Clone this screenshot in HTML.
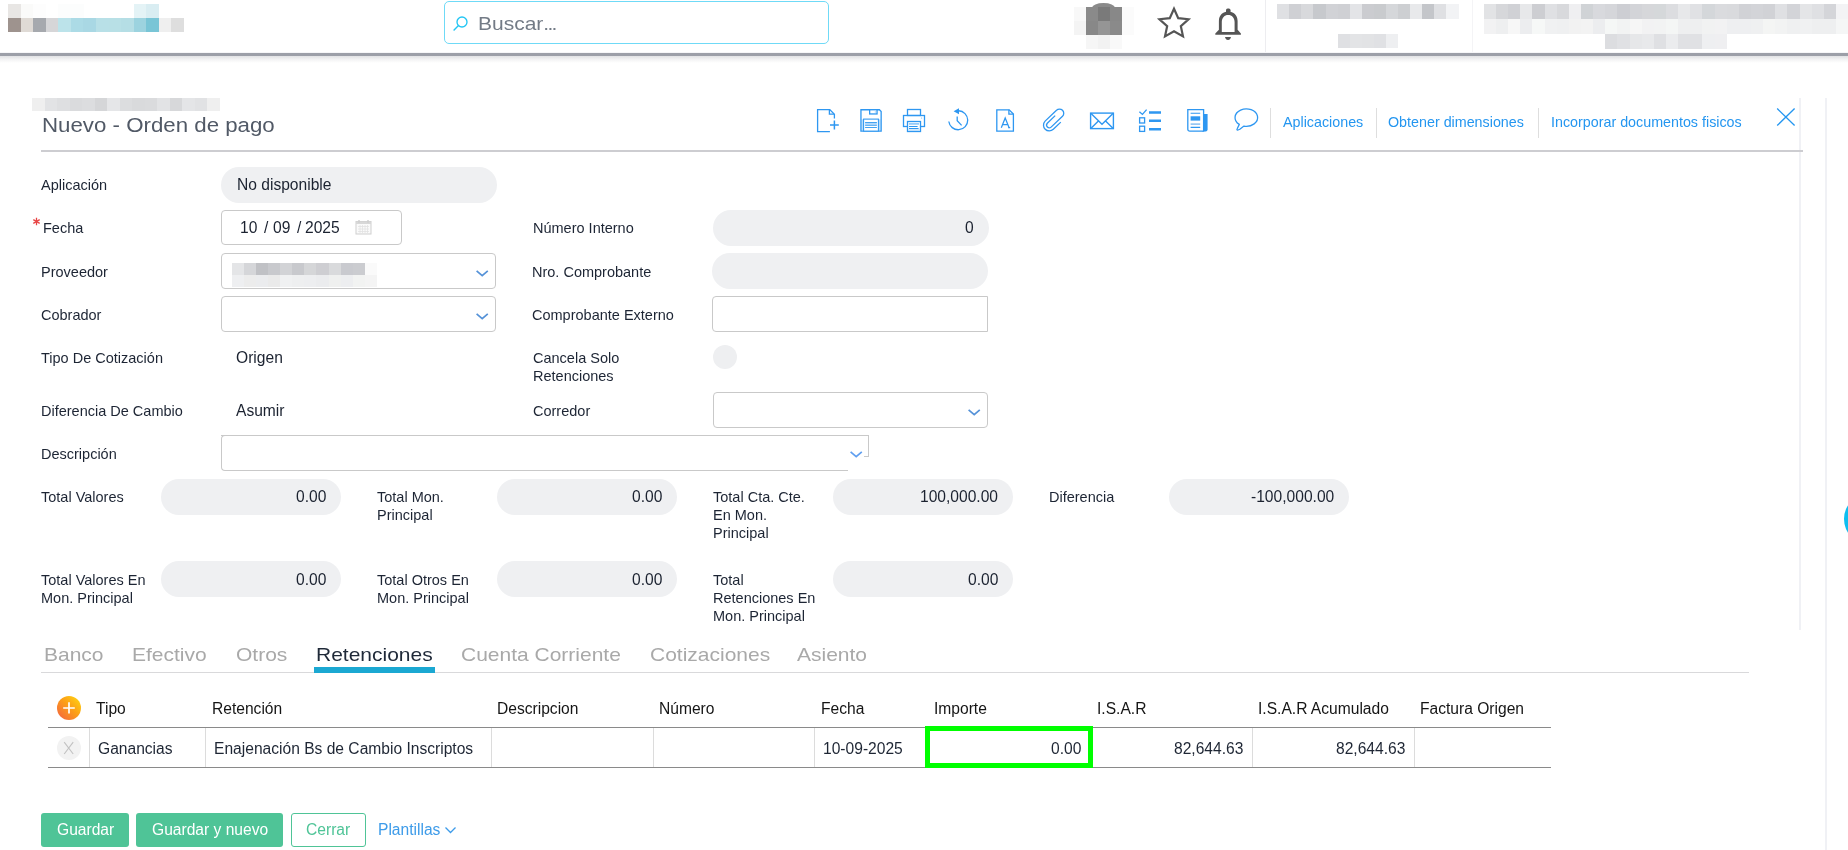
<!DOCTYPE html>
<html><head><meta charset="utf-8">
<style>
*{box-sizing:border-box;margin:0;padding:0}
html,body{width:1848px;height:850px;overflow:hidden;background:#fff;font-family:"Liberation Sans",sans-serif;color:#2b3340}
.a{position:absolute;white-space:nowrap;line-height:1;will-change:transform}
.px{position:absolute}
.inp{position:absolute;border:1px solid #c9c9c9;border-radius:4px;background:#fff}
</style></head><body>
<div class="px" style="left:0px;top:52px;width:1848px;height:1px;background:#f6f6f8"></div>
<div class="px" style="left:0px;top:53px;width:1848px;height:3px;background:#9c9fa8"></div>
<div class="px" style="left:0px;top:56px;width:1848px;height:7px;background:linear-gradient(#e1e2e4,#f3f3f4 50%,#ffffff)"></div>
<div class="px" style="left:8.00px;top:4px;width:12.87px;height:14px;background:#e8e6e4"></div>
<div class="px" style="left:20.57px;top:4px;width:12.87px;height:14px;background:#fafaf9"></div>
<div class="px" style="left:33.14px;top:4px;width:12.87px;height:14px;background:#fdfdfd"></div>
<div class="px" style="left:58.28px;top:4px;width:12.87px;height:14px;background:#fcfdfd"></div>
<div class="px" style="left:70.85px;top:4px;width:12.87px;height:14px;background:#fcfdfd"></div>
<div class="px" style="left:133.70px;top:4px;width:12.87px;height:14px;background:#e4f3f6"></div>
<div class="px" style="left:146.27px;top:4px;width:12.87px;height:14px;background:#d9edf2"></div>
<div class="px" style="left:8.00px;top:18px;width:12.87px;height:14px;background:#9e938e"></div>
<div class="px" style="left:20.57px;top:18px;width:12.87px;height:14px;background:#dfdad5"></div>
<div class="px" style="left:33.14px;top:18px;width:12.87px;height:14px;background:#a6a9ae"></div>
<div class="px" style="left:45.71px;top:18px;width:12.87px;height:14px;background:#d6d6d8"></div>
<div class="px" style="left:58.28px;top:18px;width:12.87px;height:14px;background:#bce3ea"></div>
<div class="px" style="left:70.85px;top:18px;width:12.87px;height:14px;background:#acdbe6"></div>
<div class="px" style="left:83.42px;top:18px;width:12.87px;height:14px;background:#a9d8e4"></div>
<div class="px" style="left:95.99px;top:18px;width:12.87px;height:14px;background:#b8e0e7"></div>
<div class="px" style="left:108.56px;top:18px;width:12.87px;height:14px;background:#b8e0e6"></div>
<div class="px" style="left:121.13px;top:18px;width:12.87px;height:14px;background:#b5dee5"></div>
<div class="px" style="left:133.70px;top:18px;width:12.87px;height:14px;background:#9cd3df"></div>
<div class="px" style="left:146.27px;top:18px;width:12.87px;height:14px;background:#79c5d6"></div>
<div class="px" style="left:158.84px;top:18px;width:12.87px;height:14px;background:#efefef"></div>
<div class="px" style="left:171.41px;top:18px;width:12.87px;height:14px;background:#dedede"></div>
<div class="px" style="left:444px;top:1px;width:385px;height:43px;border:1px solid #6fdaf7;border-radius:5px;background:#fff"></div>
<svg class="px" style="left:452px;top:15px" width="18" height="18" viewBox="0 0 18 18"><circle cx="10" cy="7" r="5" fill="none" stroke="#22c6f4" stroke-width="1.35"/><path d="M6.5 10.6 L1.6 15.5" stroke="#22c6f4" stroke-width="1.4"/></svg>
<div class="a " style="left:478px;top:14.00px;font-size:19px;color:#737b86;transform:scaleX(1.105);transform-origin:0 0">Buscar<span style="letter-spacing:-1.55px">...</span></div>
<div class="px" style="left:1092px;top:3px;width:23px;height:10px;border-radius:50%;background:#8a8a8a"></div>
<div class="px" style="left:1074.00px;top:7px;width:12.30px;height:14px;background:#f8f8f8"></div>
<div class="px" style="left:1086.00px;top:7px;width:12.30px;height:14px;background:#8a8a8a"></div>
<div class="px" style="left:1098.00px;top:7px;width:12.30px;height:14px;background:#7a7a7a"></div>
<div class="px" style="left:1110.00px;top:7px;width:12.30px;height:14px;background:#888888"></div>
<div class="px" style="left:1122.00px;top:7px;width:12.30px;height:14px;background:#fbfbfb"></div>
<div class="px" style="left:1074.00px;top:21px;width:12.30px;height:14px;background:#f4f4f4"></div>
<div class="px" style="left:1086.00px;top:21px;width:12.30px;height:14px;background:#888888"></div>
<div class="px" style="left:1098.00px;top:21px;width:12.30px;height:14px;background:#959595"></div>
<div class="px" style="left:1110.00px;top:21px;width:12.30px;height:14px;background:#8a8a8a"></div>
<div class="px" style="left:1122.00px;top:21px;width:12.30px;height:14px;background:#fbfbfb"></div>
<div class="px" style="left:1086.00px;top:35px;width:12.30px;height:14px;background:#f6f6f6"></div>
<div class="px" style="left:1098.00px;top:35px;width:12.30px;height:14px;background:#f2f2f2"></div>
<div class="px" style="left:1110.00px;top:35px;width:12.30px;height:14px;background:#f9f9f9"></div>
<svg class="px" style="left:1154.4px;top:3.70px" width="40" height="40" viewBox="0 0 40 40"><path d="M20.00 4.70 L24.23 14.18 L34.55 15.27 L26.84 22.22 L28.99 32.38 L20.00 27.19 L11.01 32.38 L13.16 22.22 L5.45 15.27 L15.77 14.18 Z" fill="none" stroke="#555" stroke-width="2.2" stroke-linejoin="miter" stroke-miterlimit="10"/></svg>
<svg class="px" style="left:1213px;top:7px" width="30" height="35" viewBox="0 0 30 35"><rect x="13" y="1.6" width="4.5" height="4.6" rx="1.6" fill="#555"/><path fill="#555" fill-rule="evenodd" d="M5.9 22.8 V13.9 C5.9 8.4 9.9 4.6 15.25 4.6 C20.6 4.6 24.6 8.4 24.6 13.9 V22.8 L27.9 26.4 V27.8 H2.3 V26.4 Z M8.8 25.1 H21.6 V15 C21.6 10.6 18.9 7.9 15.2 7.9 C11.5 7.9 8.8 10.6 8.8 15 Z"/><path d="M12 29.9 H18 C17.6 31.9 16.5 32.9 15 32.9 C13.5 32.9 12.4 31.9 12 29.9 Z" fill="#555"/></svg>
<div class="px" style="left:1265px;top:0px;width:1px;height:52px;background:#ededf0"></div>
<div class="px" style="left:1472px;top:0px;width:1px;height:52px;background:#f4f4f6"></div>
<div class="px" style="left:1277.20px;top:4.0px;width:12.39px;height:14.5px;background:#dfe0e3"></div>
<div class="px" style="left:1289.29px;top:4.0px;width:12.39px;height:14.5px;background:#cfd0d4"></div>
<div class="px" style="left:1301.38px;top:4.0px;width:12.39px;height:14.5px;background:#d8d9dc"></div>
<div class="px" style="left:1313.47px;top:4.0px;width:12.39px;height:14.5px;background:#c7c9cd"></div>
<div class="px" style="left:1325.56px;top:4.0px;width:12.39px;height:14.5px;background:#d1d2d6"></div>
<div class="px" style="left:1337.65px;top:4.0px;width:12.39px;height:14.5px;background:#cfd0d4"></div>
<div class="px" style="left:1349.74px;top:4.0px;width:12.39px;height:14.5px;background:#e3e4e7"></div>
<div class="px" style="left:1361.83px;top:4.0px;width:12.39px;height:14.5px;background:#cbccd0"></div>
<div class="px" style="left:1373.92px;top:4.0px;width:12.39px;height:14.5px;background:#c9cbce"></div>
<div class="px" style="left:1386.01px;top:4.0px;width:12.39px;height:14.5px;background:#d5d7da"></div>
<div class="px" style="left:1398.10px;top:4.0px;width:12.39px;height:14.5px;background:#cdcfd2"></div>
<div class="px" style="left:1410.19px;top:4.0px;width:12.39px;height:14.5px;background:#e8e9eb"></div>
<div class="px" style="left:1422.28px;top:4.0px;width:12.39px;height:14.5px;background:#c4c6ca"></div>
<div class="px" style="left:1434.37px;top:4.0px;width:12.39px;height:14.5px;background:#dfe0e3"></div>
<div class="px" style="left:1446.46px;top:4.0px;width:12.39px;height:14.5px;background:#f2f3f5"></div>
<div class="px" style="left:1338.00px;top:33.5px;width:12.30px;height:14.5px;background:#dfe0e3"></div>
<div class="px" style="left:1350.00px;top:33.5px;width:12.30px;height:14.5px;background:#e3e4e6"></div>
<div class="px" style="left:1362.00px;top:33.5px;width:12.30px;height:14.5px;background:#e2e3e5"></div>
<div class="px" style="left:1374.00px;top:33.5px;width:12.30px;height:14.5px;background:#e0e1e4"></div>
<div class="px" style="left:1386.00px;top:33.5px;width:12.30px;height:14.5px;background:#eeeff1"></div>
<div class="px" style="left:1483.90px;top:4.0px;width:12.44px;height:14.9px;background:#e2e3e5"></div>
<div class="px" style="left:1496.04px;top:4.0px;width:12.44px;height:14.9px;background:#d6d7da"></div>
<div class="px" style="left:1508.18px;top:4.0px;width:12.44px;height:14.9px;background:#d0d1d5"></div>
<div class="px" style="left:1520.32px;top:4.0px;width:12.44px;height:14.9px;background:#e7e8ea"></div>
<div class="px" style="left:1532.46px;top:4.0px;width:12.44px;height:14.9px;background:#cdced2"></div>
<div class="px" style="left:1544.60px;top:4.0px;width:12.44px;height:14.9px;background:#dfe0e3"></div>
<div class="px" style="left:1556.74px;top:4.0px;width:12.44px;height:14.9px;background:#d8d9dc"></div>
<div class="px" style="left:1568.88px;top:4.0px;width:12.44px;height:14.9px;background:#efeff1"></div>
<div class="px" style="left:1581.02px;top:4.0px;width:12.44px;height:14.9px;background:#d0d3d6"></div>
<div class="px" style="left:1593.16px;top:4.0px;width:12.44px;height:14.9px;background:#d8d9dd"></div>
<div class="px" style="left:1605.30px;top:4.0px;width:12.44px;height:14.9px;background:#d5d6da"></div>
<div class="px" style="left:1617.44px;top:4.0px;width:12.44px;height:14.9px;background:#cdced3"></div>
<div class="px" style="left:1629.58px;top:4.0px;width:12.44px;height:14.9px;background:#d3d4d8"></div>
<div class="px" style="left:1641.72px;top:4.0px;width:12.44px;height:14.9px;background:#d6d7da"></div>
<div class="px" style="left:1653.86px;top:4.0px;width:12.44px;height:14.9px;background:#d5d8da"></div>
<div class="px" style="left:1666.00px;top:4.0px;width:12.44px;height:14.9px;background:#dcdde0"></div>
<div class="px" style="left:1678.14px;top:4.0px;width:12.44px;height:14.9px;background:#e7e8ea"></div>
<div class="px" style="left:1690.28px;top:4.0px;width:12.44px;height:14.9px;background:#e0e1e4"></div>
<div class="px" style="left:1702.42px;top:4.0px;width:12.44px;height:14.9px;background:#d4d7da"></div>
<div class="px" style="left:1714.56px;top:4.0px;width:12.44px;height:14.9px;background:#dadbde"></div>
<div class="px" style="left:1726.70px;top:4.0px;width:12.44px;height:14.9px;background:#d9dadd"></div>
<div class="px" style="left:1738.84px;top:4.0px;width:12.44px;height:14.9px;background:#d1d2d6"></div>
<div class="px" style="left:1750.98px;top:4.0px;width:12.44px;height:14.9px;background:#d3d4d8"></div>
<div class="px" style="left:1763.12px;top:4.0px;width:12.44px;height:14.9px;background:#d1d2d6"></div>
<div class="px" style="left:1775.26px;top:4.0px;width:12.44px;height:14.9px;background:#dfe0e3"></div>
<div class="px" style="left:1787.40px;top:4.0px;width:12.44px;height:14.9px;background:#d3d4d8"></div>
<div class="px" style="left:1799.54px;top:4.0px;width:12.44px;height:14.9px;background:#e4e5e7"></div>
<div class="px" style="left:1811.68px;top:4.0px;width:12.44px;height:14.9px;background:#dfe0e3"></div>
<div class="px" style="left:1823.82px;top:4.0px;width:12.44px;height:14.9px;background:#d4d5d9"></div>
<div class="px" style="left:1835.96px;top:4.0px;width:12.44px;height:14.9px;background:#f3f3f5"></div>
<div class="px" style="left:1483.90px;top:18.9px;width:12.44px;height:14.9px;background:#f2f2f3"></div>
<div class="px" style="left:1496.04px;top:18.9px;width:12.44px;height:14.9px;background:#eeeff0"></div>
<div class="px" style="left:1508.18px;top:18.9px;width:12.44px;height:14.9px;background:#f7f7f7"></div>
<div class="px" style="left:1520.32px;top:18.9px;width:12.44px;height:14.9px;background:#ecedef"></div>
<div class="px" style="left:1532.46px;top:18.9px;width:12.44px;height:14.9px;background:#f6f8f7"></div>
<div class="px" style="left:1544.60px;top:18.9px;width:12.44px;height:14.9px;background:#f0f1f2"></div>
<div class="px" style="left:1556.74px;top:18.9px;width:12.44px;height:14.9px;background:#eff0f1"></div>
<div class="px" style="left:1568.88px;top:18.9px;width:12.44px;height:14.9px;background:#f2f2f2"></div>
<div class="px" style="left:1581.02px;top:18.9px;width:12.44px;height:14.9px;background:#f3f3f3"></div>
<div class="px" style="left:1593.16px;top:18.9px;width:12.44px;height:14.9px;background:#ecedef"></div>
<div class="px" style="left:1605.30px;top:18.9px;width:12.44px;height:14.9px;background:#f5f7f6"></div>
<div class="px" style="left:1617.44px;top:18.9px;width:12.44px;height:14.9px;background:#f2f3f3"></div>
<div class="px" style="left:1629.58px;top:18.9px;width:12.44px;height:14.9px;background:#f6f6f6"></div>
<div class="px" style="left:1641.72px;top:18.9px;width:12.44px;height:14.9px;background:#f2f2f3"></div>
<div class="px" style="left:1653.86px;top:18.9px;width:12.44px;height:14.9px;background:#f2f3f3"></div>
<div class="px" style="left:1666.00px;top:18.9px;width:12.44px;height:14.9px;background:#f4f6f5"></div>
<div class="px" style="left:1678.14px;top:18.9px;width:12.44px;height:14.9px;background:#eeeff0"></div>
<div class="px" style="left:1690.28px;top:18.9px;width:12.44px;height:14.9px;background:#eeeff0"></div>
<div class="px" style="left:1702.42px;top:18.9px;width:12.44px;height:14.9px;background:#f1f2f2"></div>
<div class="px" style="left:1714.56px;top:18.9px;width:12.44px;height:14.9px;background:#f2f2f3"></div>
<div class="px" style="left:1726.70px;top:18.9px;width:12.44px;height:14.9px;background:#eeeff1"></div>
<div class="px" style="left:1738.84px;top:18.9px;width:12.44px;height:14.9px;background:#eeeff1"></div>
<div class="px" style="left:1750.98px;top:18.9px;width:12.44px;height:14.9px;background:#eff0f1"></div>
<div class="px" style="left:1763.12px;top:18.9px;width:12.44px;height:14.9px;background:#f4f5f4"></div>
<div class="px" style="left:1775.26px;top:18.9px;width:12.44px;height:14.9px;background:#f2f3f3"></div>
<div class="px" style="left:1787.40px;top:18.9px;width:12.44px;height:14.9px;background:#eff0f1"></div>
<div class="px" style="left:1799.54px;top:18.9px;width:12.44px;height:14.9px;background:#f0f1f2"></div>
<div class="px" style="left:1811.68px;top:18.9px;width:12.44px;height:14.9px;background:#eeeff0"></div>
<div class="px" style="left:1823.82px;top:18.9px;width:12.44px;height:14.9px;background:#eeeff0"></div>
<div class="px" style="left:1835.96px;top:18.9px;width:12.44px;height:14.9px;background:#f5f6f6"></div>
<div class="px" style="left:1605.30px;top:33.8px;width:12.44px;height:14.9px;background:#dcdde0"></div>
<div class="px" style="left:1617.44px;top:33.8px;width:12.44px;height:14.9px;background:#e0e1e4"></div>
<div class="px" style="left:1629.58px;top:33.8px;width:12.44px;height:14.9px;background:#e6e7e9"></div>
<div class="px" style="left:1641.72px;top:33.8px;width:12.44px;height:14.9px;background:#e8e9eb"></div>
<div class="px" style="left:1653.86px;top:33.8px;width:12.44px;height:14.9px;background:#dfe0e3"></div>
<div class="px" style="left:1666.00px;top:33.8px;width:12.44px;height:14.9px;background:#ebecee"></div>
<div class="px" style="left:1678.14px;top:33.8px;width:12.44px;height:14.9px;background:#e0e1e4"></div>
<div class="px" style="left:1690.28px;top:33.8px;width:12.44px;height:14.9px;background:#e0e1e4"></div>
<div class="px" style="left:1702.42px;top:33.8px;width:12.44px;height:14.9px;background:#eeeff1"></div>
<div class="px" style="left:1714.56px;top:33.8px;width:12.44px;height:14.9px;background:#efeff1"></div>
<div class="px" style="left:32.00px;top:98px;width:12.83px;height:13px;background:#efefef"></div>
<div class="px" style="left:44.53px;top:98px;width:12.83px;height:13px;background:#e2e3e5"></div>
<div class="px" style="left:57.06px;top:98px;width:12.83px;height:13px;background:#dedfe1"></div>
<div class="px" style="left:69.59px;top:98px;width:12.83px;height:13px;background:#dadbdd"></div>
<div class="px" style="left:82.12px;top:98px;width:12.83px;height:13px;background:#dcdddf"></div>
<div class="px" style="left:94.65px;top:98px;width:12.83px;height:13px;background:#d5d6d8"></div>
<div class="px" style="left:107.18px;top:98px;width:12.83px;height:13px;background:#e5e6e8"></div>
<div class="px" style="left:119.71px;top:98px;width:12.83px;height:13px;background:#dcdddf"></div>
<div class="px" style="left:132.24px;top:98px;width:12.83px;height:13px;background:#d9dadc"></div>
<div class="px" style="left:144.77px;top:98px;width:12.83px;height:13px;background:#dadbdd"></div>
<div class="px" style="left:157.30px;top:98px;width:12.83px;height:13px;background:#e2e3e5"></div>
<div class="px" style="left:169.83px;top:98px;width:12.83px;height:13px;background:#d7d8da"></div>
<div class="px" style="left:182.36px;top:98px;width:12.83px;height:13px;background:#e4e5e7"></div>
<div class="px" style="left:194.89px;top:98px;width:12.83px;height:13px;background:#e1e2e4"></div>
<div class="px" style="left:207.42px;top:98px;width:12.83px;height:13px;background:#efefef"></div>
<div class="a " style="left:42px;top:115.85px;font-size:19.3px;color:#515966;transform:scaleX(1.155);transform-origin:0 0">Nuevo - Orden de pago</div>
<div class="px" style="left:1799px;top:98px;width:2px;height:532px;background:#f0f1f5"></div>
<div class="px" style="left:41px;top:150px;width:1762px;height:2px;background:#cdcdd1"></div>
<div class="px" style="left:1825px;top:98px;width:2px;height:752px;background:#f0f1f5"></div>
<div class="px" style="left:1844px;top:493px;width:52px;height:52px;border-radius:50%;background:#0dbef0"></div>
<div class="px" style="left:1270px;top:108px;width:1px;height:30px;background:#dedede"></div>
<div class="px" style="left:1376px;top:108px;width:1px;height:30px;background:#dedede"></div>
<div class="px" style="left:1538px;top:108px;width:1px;height:30px;background:#dedede"></div>
<div class="a " style="left:1283px;top:114.85px;font-size:14.3px;color:#2496f0;">Aplicaciones</div>
<div class="a " style="left:1388px;top:114.85px;font-size:14.3px;color:#2496f0;">Obtener dimensiones</div>
<div class="a " style="left:1551px;top:114.85px;font-size:14.3px;color:#2496f0;">Incorporar documentos fisicos</div>
<svg class="px" style="left:1775px;top:107px" width="21" height="20" viewBox="0 0 21 20"><path d="M2.2 1.6 L19.6 18.6 M19.6 1.6 L2.2 18.6" stroke="#2496f0" stroke-width="1.35"/></svg>
<svg class="px" style="left:816px;top:108px" width="25" height="26" viewBox="0 0 25 26" fill="none" stroke="#2e97f1" stroke-width="1.3">
<path d="M13.9 23.6 H1.6 V1.6 H13.8 L18.4 6.2 V10.4"/><path d="M13.4 1.8 V6.2 H18"/><path d="M14 17 H22.8 M18.4 12.6 V21.4" stroke-width="1.5"/></svg>
<svg class="px" style="left:859px;top:108px" width="25" height="26" viewBox="0 0 25 26" fill="none" stroke="#2e97f1" stroke-width="1.3">
<rect x="2.5" y="11.3" width="19" height="11.3" fill="#b9ddfb" stroke="none"/><path d="M1.95 1.75 H20.4 L22.15 3.5 V23.15 H1.95 Z"/><rect x="4.6" y="11.1" width="14.8" height="12" fill="#fff" stroke-width="1.05"/><rect x="6.1" y="15.1" width="11.8" height="1.6" fill="#a9d4fa" stroke="none"/><path d="M6.1 14.5 H17.9 M6.1 17.3 H17.9 M6.1 19.5 H17.9" stroke-width="0.9"/><rect x="10.65" y="1.75" width="7.4" height="4.2" fill="#fff"/><path d="M16.3 3.1 V4.9" stroke-width="0.7" stroke="#8cc6f8"/></svg>
<svg class="px" style="left:902px;top:108px" width="25" height="26" viewBox="0 0 25 26" fill="none" stroke="#2e97f1" stroke-width="1.3">
<rect x="5.5" y="1.5" width="13" height="6"/><rect x="1.5" y="7.5" width="21" height="11"/><rect x="5.5" y="13.5" width="13" height="10" fill="#fff"/><rect x="7" y="15.1" width="10" height="1.6" fill="#8cc6f8" stroke="none"/><path d="M7 18.5 H15.6 M7 20.5 H16.6" stroke-width="1"/><rect x="6.2" y="21.4" width="11.6" height="1.4" fill="#b9ddfb" stroke="none"/><path d="M19.6 9.4 V10.8" stroke-width="0.8" stroke="#8cc6f8"/></svg>
<svg class="px" style="left:946px;top:106px" width="25" height="27" viewBox="0 0 25 27" fill="none" stroke="#2e97f1" stroke-width="1.3">
<path d="M2.8 15.5 A9.5 9.5 0 1 0 12.6 4.75"/><path d="M7.6 5.3 L13 2.2 L13 8.3 Z" fill="#2e97f1" stroke="none"/><path d="M11.2 10.6 V14.8 L15.6 19.4"/></svg>
<svg class="px" style="left:995px;top:108px" width="22" height="26" viewBox="0 0 22 26" fill="none" stroke="#2e97f1" stroke-width="1.3">
<path d="M1.8 1.8 H14.2 L18.4 6 V23.2 H1.8 Z"/><path d="M13.9 1.8 V6.2 H18.2"/><path d="M6.3 19.8 L10.2 10 L14.1 19.8 M13.1 19.7 H15.2 M7.5 16.6 H12.9" stroke-width="1.25"/></svg>
<svg class="px" style="left:1040px;top:106px" width="28" height="28" viewBox="0 0 28 28" fill="none" stroke="#2e97f1" stroke-width="1.3">
<path d="M20.8 16.1 L13.3 23.3 A5.8 5.8 0 0 1 5.1 15.1 L16.5 4.3 A4.24 4.24 0 0 1 22.5 10.3 L11.1 21.1 A2.69 2.69 0 0 1 7.3 17.3 L15.2 9.6"/></svg>
<svg class="px" style="left:1089px;top:111px" width="26" height="20" viewBox="0 0 26 20" fill="none" stroke="#2e97f1" stroke-width="1.4">
<rect x="1.6" y="2.1" width="22.8" height="15.5"/><path d="M1.8 2.3 L13 13.2 L24.2 2.3 M1.8 17.5 L9.4 10 M24.2 17.5 L16.6 10"/></svg>
<svg class="px" style="left:1138px;top:108px" width="25" height="26" viewBox="0 0 25 26" fill="none" stroke="#2e97f1" stroke-width="1.3">
<path d="M1.4 3.8 L4.4 6.4 L8.6 1.6"/><rect x="1.6" y="9.8" width="5" height="5.2"/><rect x="1.6" y="18.2" width="5" height="5.2"/><path d="M11 4.5 H23 M11 12.8 H23 M11 21.2 H23" stroke-width="2.5"/></svg>
<svg class="px" style="left:1186px;top:108px" width="24" height="26" viewBox="0 0 24 26" fill="none" stroke="#2e97f1" stroke-width="1.3">
<path d="M16 6 H21.6 V21.6 C21.6 22.8 20.8 23.4 19.8 23.4 H16 Z" fill="#2e97f1" stroke="none"/><path d="M1.8 1.6 H17.6 V23.2 H3.8 C2.6 23.2 1.8 22.4 1.8 21.2 Z" fill="#fff"/><path d="M4.6 5.3 H14.2 M4.6 19.4 H14.2" stroke-width="1.1"/><path d="M4.6 16.1 H14.2" stroke-width="1.4" stroke="#7dbaf0"/><rect x="4.6" y="8.3" width="9.6" height="4.3" fill="#2e97f1" stroke="none"/></svg>
<svg class="px" style="left:1233px;top:107px" width="27" height="25" viewBox="0 0 27 25" fill="none" stroke="#2e97f1" stroke-width="1.3">
<path d="M6.3 17.4 A11.3 8.7 0 1 1 11 19.1 L6.8 22.3 C5.2 23.3 3.3 23.4 4.2 21.8 Z" stroke-linejoin="round"/></svg>
<div class="a " style="left:41px;top:177.75px;font-size:14.5px;color:#1d2534;">Aplicación</div>
<div class="px" style="left:221px;top:167px;width:276px;height:36px;background:#eff0f2;border-radius:18px"></div>
<div class="a " style="left:237px;top:176.70px;font-size:15.6px;color:#1b2230;">No disponible</div>
<svg class="px" style="left:32px;top:217px" width="9" height="9" viewBox="0 0 9 9"><path d="M4.5 0.8 V8.2 M1.3 2.6 L7.7 6.4 M7.7 2.6 L1.3 6.4" stroke="#e84545" stroke-width="1.3"/></svg>
<div class="a " style="left:43px;top:220.75px;font-size:14.5px;color:#1d2534;">Fecha</div>
<div class="inp" style="left:221px;top:210px;width:181px;height:35px;border-radius:4px"></div>
<div class="a " style="left:239.6px;top:219.70px;font-size:15.6px;color:#1b2230;">10</div>
<div class="a " style="left:264.2px;top:219.70px;font-size:15.6px;color:#1b2230;">/</div>
<div class="a " style="left:273px;top:219.70px;font-size:15.6px;color:#1b2230;">09</div>
<div class="a " style="left:297px;top:219.70px;font-size:15.6px;color:#1b2230;">/</div>
<div class="a " style="left:305.2px;top:219.70px;font-size:15.6px;color:#1b2230;">2025</div>
<svg class="px" style="left:355px;top:219px" width="18" height="16" viewBox="0 0 18 16"><rect x="1" y="2.5" width="15" height="12.5" fill="#fafafa" stroke="#cfcfcf" stroke-width="1"/><rect x="1" y="2.5" width="15" height="2.5" fill="#d8d8d8"/><path d="M4 1 V4 M13 1 V4" stroke="#cfcfcf" stroke-width="1.5"/><path d="M3 7.5 H14 M3 10 H14 M3 12.5 H14 M5 6 V14 M7.5 6 V14 M10 6 V14 M12.5 6 V14" stroke="#e2e2e2" stroke-width="0.8"/></svg>
<div class="a " style="left:41px;top:264.75px;font-size:14.5px;color:#1d2534;">Proveedor</div>
<div class="inp" style="left:221px;top:253px;width:275px;height:36px"></div>
<div class="px" style="left:231.90px;top:263.0px;width:12.38px;height:11.8px;background:#e4e5e7"></div>
<div class="px" style="left:243.98px;top:263.0px;width:12.38px;height:11.8px;background:#d5d6d9"></div>
<div class="px" style="left:256.06px;top:263.0px;width:12.38px;height:11.8px;background:#c0c1c5"></div>
<div class="px" style="left:268.14px;top:263.0px;width:12.38px;height:11.8px;background:#c8c9cd"></div>
<div class="px" style="left:280.22px;top:263.0px;width:12.38px;height:11.8px;background:#d2d3d6"></div>
<div class="px" style="left:292.30px;top:263.0px;width:12.38px;height:11.8px;background:#c8c9cd"></div>
<div class="px" style="left:304.38px;top:263.0px;width:12.38px;height:11.8px;background:#d5d6d8"></div>
<div class="px" style="left:316.46px;top:263.0px;width:12.38px;height:11.8px;background:#ceced2"></div>
<div class="px" style="left:328.54px;top:263.0px;width:12.38px;height:11.8px;background:#d9dadc"></div>
<div class="px" style="left:340.62px;top:263.0px;width:12.38px;height:11.8px;background:#c9cacf"></div>
<div class="px" style="left:352.70px;top:263.0px;width:12.38px;height:11.8px;background:#cbccd0"></div>
<div class="px" style="left:364.78px;top:263.0px;width:12.38px;height:11.8px;background:#fafafa"></div>
<div class="px" style="left:231.90px;top:274.8px;width:12.38px;height:11.8px;background:#eeeff1"></div>
<div class="px" style="left:243.98px;top:274.8px;width:12.38px;height:11.8px;background:#ececec"></div>
<div class="px" style="left:256.06px;top:274.8px;width:12.38px;height:11.8px;background:#ebecee"></div>
<div class="px" style="left:268.14px;top:274.8px;width:12.38px;height:11.8px;background:#eaeaea"></div>
<div class="px" style="left:280.22px;top:274.8px;width:12.38px;height:11.8px;background:#f0f1f2"></div>
<div class="px" style="left:292.30px;top:274.8px;width:12.38px;height:11.8px;background:#eeeff0"></div>
<div class="px" style="left:304.38px;top:274.8px;width:12.38px;height:11.8px;background:#edeef0"></div>
<div class="px" style="left:316.46px;top:274.8px;width:12.38px;height:11.8px;background:#ebecee"></div>
<div class="px" style="left:328.54px;top:274.8px;width:12.38px;height:11.8px;background:#eff0ef"></div>
<div class="px" style="left:340.62px;top:274.8px;width:12.38px;height:11.8px;background:#edeef0"></div>
<div class="px" style="left:352.70px;top:274.8px;width:12.38px;height:11.8px;background:#f2f3f2"></div>
<div class="px" style="left:364.78px;top:274.8px;width:12.38px;height:11.8px;background:#f4f4f4"></div>
<svg class="px" style="left:476px;top:268.6px" width="14" height="9" viewBox="0 0 14 9"><path d="M0.6 1.8 L6.2 6.6 L11.8 1.8" fill="none" stroke="#5592d8" stroke-width="1.7"/></svg>
<div class="a " style="left:41px;top:307.75px;font-size:14.5px;color:#1d2534;">Cobrador</div>
<div class="inp" style="left:221px;top:296px;width:275px;height:36px"></div>
<svg class="px" style="left:476px;top:311.6px" width="14" height="9" viewBox="0 0 14 9"><path d="M0.6 1.8 L6.2 6.6 L11.8 1.8" fill="none" stroke="#5592d8" stroke-width="1.7"/></svg>
<div class="a " style="left:41px;top:350.75px;font-size:14.5px;color:#1d2534;">Tipo De Cotización</div>
<div class="a " style="left:236px;top:349.70px;font-size:15.6px;color:#1b2230;">Origen</div>
<div class="a " style="left:41px;top:403.75px;font-size:14.5px;color:#1d2534;">Diferencia De Cambio</div>
<div class="a " style="left:236px;top:402.70px;font-size:15.6px;color:#1b2230;">Asumir</div>
<div class="a " style="left:41px;top:446.75px;font-size:14.5px;color:#1d2534;">Descripción</div>
<div class="px" style="left:221px;top:435px;width:648px;height:1px;background:#c9c9c9"></div>
<div class="px" style="left:221px;top:435px;width:627px;height:36px;border:1px solid #c9c9c9;border-right:none;border-radius:4px 0 0 4px"></div>
<div class="px" style="left:868px;top:435px;width:1px;height:22px;background:#c9c9c9"></div>
<div class="px" style="left:864px;top:456px;width:5px;height:1px;background:#c9c9c9"></div>
<svg class="px" style="left:850px;top:450px" width="14" height="9" viewBox="0 0 14 9"><path d="M0.6 1.8 L6.2 6.6 L11.8 1.8" fill="none" stroke="#609ff0" stroke-width="1.7"/></svg>
<div class="a " style="left:533px;top:220.75px;font-size:14.5px;color:#1d2534;">Número Interno</div>
<div class="px" style="left:713px;top:210px;width:276px;height:36px;background:#eff0f2;border-radius:18px"></div>
<div class="a" style="right:874px;top:219.70px;font-size:15.6px;color:#1b2230;">0</div>
<div class="a " style="left:532px;top:264.75px;font-size:14.5px;color:#1d2534;">Nro. Comprobante</div>
<div class="px" style="left:712px;top:253px;width:276px;height:36px;background:#eff0f2;border-radius:18px"></div>
<div class="a " style="left:532px;top:307.75px;font-size:14.5px;color:#1d2534;">Comprobante Externo</div>
<div class="inp" style="left:712px;top:296px;width:276px;height:36px;border-radius:4px 0 0 4px"></div>
<div class="a " style="left:533px;top:350.75px;font-size:14.5px;color:#1d2534;">Cancela Solo</div>
<div class="a " style="left:533px;top:368.75px;font-size:14.5px;color:#1d2534;">Retenciones</div>
<div class="px" style="left:713px;top:345px;width:24px;height:24px;border-radius:50%;background:#eeeff1"></div>
<div class="a " style="left:533px;top:403.75px;font-size:14.5px;color:#1d2534;">Corredor</div>
<div class="inp" style="left:713px;top:392px;width:275px;height:36px"></div>
<svg class="px" style="left:968px;top:407.5px" width="14" height="9" viewBox="0 0 14 9"><path d="M0.6 1.8 L6.2 6.6 L11.8 1.8" fill="none" stroke="#5592d8" stroke-width="1.7"/></svg>
<div class="a " style="left:41px;top:489.75px;font-size:14.5px;color:#1d2534;">Total Valores</div>
<div class="px" style="left:161px;top:479px;width:180px;height:36px;background:#eff0f2;border-radius:18px"></div>
<div class="a" style="right:1522px;top:488.70px;font-size:15.6px;color:#1b2230;">0.00</div>
<div class="a " style="left:377px;top:489.75px;font-size:14.5px;color:#1d2534;">Total Mon.</div>
<div class="a " style="left:377px;top:507.75px;font-size:14.5px;color:#1d2534;">Principal</div>
<div class="px" style="left:497px;top:479px;width:180px;height:36px;background:#eff0f2;border-radius:18px"></div>
<div class="a" style="right:1186px;top:488.70px;font-size:15.6px;color:#1b2230;">0.00</div>
<div class="a " style="left:713px;top:489.75px;font-size:14.5px;color:#1d2534;">Total Cta. Cte.</div>
<div class="a " style="left:713px;top:507.75px;font-size:14.5px;color:#1d2534;">En Mon.</div>
<div class="a " style="left:713px;top:525.75px;font-size:14.5px;color:#1d2534;">Principal</div>
<div class="px" style="left:833px;top:479px;width:180px;height:36px;background:#eff0f2;border-radius:18px"></div>
<div class="a" style="right:850px;top:488.70px;font-size:15.6px;color:#1b2230;">100,000.00</div>
<div class="a " style="left:1049px;top:489.75px;font-size:14.5px;color:#1d2534;">Diferencia</div>
<div class="px" style="left:1169px;top:479px;width:180px;height:36px;background:#eff0f2;border-radius:18px"></div>
<div class="a" style="right:514px;top:488.70px;font-size:15.6px;color:#1b2230;">-100,000.00</div>
<div class="a " style="left:41px;top:572.75px;font-size:14.5px;color:#1d2534;">Total Valores En</div>
<div class="a " style="left:41px;top:590.75px;font-size:14.5px;color:#1d2534;">Mon. Principal</div>
<div class="px" style="left:161px;top:561px;width:180px;height:36px;background:#eff0f2;border-radius:18px"></div>
<div class="a" style="right:1522px;top:571.70px;font-size:15.6px;color:#1b2230;">0.00</div>
<div class="a " style="left:377px;top:572.75px;font-size:14.5px;color:#1d2534;">Total Otros En</div>
<div class="a " style="left:377px;top:590.75px;font-size:14.5px;color:#1d2534;">Mon. Principal</div>
<div class="px" style="left:497px;top:561px;width:180px;height:36px;background:#eff0f2;border-radius:18px"></div>
<div class="a" style="right:1186px;top:571.70px;font-size:15.6px;color:#1b2230;">0.00</div>
<div class="a " style="left:713px;top:572.75px;font-size:14.5px;color:#1d2534;">Total</div>
<div class="a " style="left:713px;top:590.75px;font-size:14.5px;color:#1d2534;">Retenciones En</div>
<div class="a " style="left:713px;top:608.75px;font-size:14.5px;color:#1d2534;">Mon. Principal</div>
<div class="px" style="left:833px;top:561px;width:180px;height:36px;background:#eff0f2;border-radius:18px"></div>
<div class="a" style="right:850px;top:571.70px;font-size:15.6px;color:#1b2230;">0.00</div>
<div class="px" style="left:41px;top:672px;width:1708px;height:1px;background:#d9d9db"></div>
<div class="a " style="left:44px;top:645.00px;font-size:19px;color:#a9a9a9;transform:scaleX(1.105);transform-origin:0 0">Banco</div>
<div class="a " style="left:132px;top:645.00px;font-size:19px;color:#a9a9a9;transform:scaleX(1.105);transform-origin:0 0">Efectivo</div>
<div class="a " style="left:236px;top:645.00px;font-size:19px;color:#a9a9a9;transform:scaleX(1.105);transform-origin:0 0">Otros</div>
<div class="a " style="left:316px;top:645.00px;font-size:19px;color:#1f2938;transform:scaleX(1.105);transform-origin:0 0">Retenciones</div>
<div class="a " style="left:461px;top:645.00px;font-size:19px;color:#a9a9a9;transform:scaleX(1.105);transform-origin:0 0">Cuenta Corriente</div>
<div class="a " style="left:650px;top:645.00px;font-size:19px;color:#a9a9a9;transform:scaleX(1.105);transform-origin:0 0">Cotizaciones</div>
<div class="a " style="left:797px;top:645.00px;font-size:19px;color:#a9a9a9;transform:scaleX(1.105);transform-origin:0 0">Asiento</div>
<div class="px" style="left:314px;top:667px;width:121px;height:6px;background:#1ba8d2"></div>
<div class="px" style="left:57px;top:696px;width:24px;height:24px;border-radius:50%;background:linear-gradient(225deg,#ffdc12 0%,#fca017 45%,#f35f44 100%)"></div>
<svg class="px" style="left:57px;top:696px" width="24" height="24" viewBox="0 0 24 24"><path d="M12 6.2 V17.6 M6.2 12 H17.8" stroke="#fff" stroke-width="1.7"/></svg>
<div class="a " style="left:96px;top:700.70px;font-size:15.6px;color:#151515;">Tipo</div>
<div class="a " style="left:212px;top:700.70px;font-size:15.6px;color:#151515;">Retención</div>
<div class="a " style="left:497.3px;top:700.70px;font-size:15.6px;color:#151515;">Descripcion</div>
<div class="a " style="left:658.6px;top:700.70px;font-size:15.6px;color:#151515;">Número</div>
<div class="a " style="left:821px;top:700.70px;font-size:15.6px;color:#151515;">Fecha</div>
<div class="a " style="left:934.3px;top:700.70px;font-size:15.6px;color:#151515;">Importe</div>
<div class="a " style="left:1096.5px;top:700.70px;font-size:15.6px;color:#151515;">I.S.A.R</div>
<div class="a " style="left:1258px;top:700.70px;font-size:15.6px;color:#151515;">I.S.A.R Acumulado</div>
<div class="a " style="left:1419.7px;top:700.70px;font-size:15.6px;color:#151515;">Factura Origen</div>
<div class="px" style="left:48px;top:727px;width:1503px;height:1px;background:#8a8a8a"></div>
<div class="px" style="left:48px;top:767px;width:1503px;height:1px;background:#8a8a8a"></div>
<div class="px" style="left:89px;top:728px;width:1px;height:39px;background:#dcdcdc"></div>
<div class="px" style="left:205px;top:728px;width:1px;height:39px;background:#dcdcdc"></div>
<div class="px" style="left:491px;top:728px;width:1px;height:39px;background:#dcdcdc"></div>
<div class="px" style="left:653px;top:728px;width:1px;height:39px;background:#dcdcdc"></div>
<div class="px" style="left:814px;top:728px;width:1px;height:39px;background:#dcdcdc"></div>
<div class="px" style="left:1252px;top:728px;width:1px;height:39px;background:#dcdcdc"></div>
<div class="px" style="left:1414px;top:728px;width:1px;height:39px;background:#dcdcdc"></div>
<div class="px" style="left:57px;top:736px;width:24px;height:24px;border-radius:50%;background:#f2f2f2"></div>
<svg class="px" style="left:63px;top:741px" width="12" height="14" viewBox="0 0 12 14"><path d="M1.2 1.2 L10.2 13 M10.2 1.2 L1.2 13" stroke="#c2c2c2" stroke-width="1.15"/></svg>
<div class="a " style="left:98.2px;top:740.70px;font-size:15.6px;color:#1e2634;">Ganancias</div>
<div class="a " style="left:214.4px;top:740.70px;font-size:15.6px;color:#1e2634;">Enajenación Bs de Cambio Inscriptos</div>
<div class="a " style="left:822.8px;top:740.70px;font-size:15.6px;color:#1e2634;">10-09-2025</div>
<div class="px" style="left:925px;top:725.5px;width:168px;height:42.5px;border:5px solid #00ff00"></div>
<div class="a" style="right:766.5px;top:740.70px;font-size:15.6px;color:#1e2634;">0.00</div>
<div class="a" style="right:605px;top:740.70px;font-size:15.6px;color:#1e2634;">82,644.63</div>
<div class="a" style="right:443px;top:740.70px;font-size:15.6px;color:#1e2634;">82,644.63</div>
<div class="px" style="left:41px;top:813px;width:88px;height:33.5px;background:#4fc497;border-radius:3px"></div>
<div class="a " style="left:57px;top:821.70px;font-size:15.6px;color:#fff;">Guardar</div>
<div class="px" style="left:136px;top:813px;width:147px;height:33.5px;background:#4fc497;border-radius:3px"></div>
<div class="a " style="left:152px;top:821.70px;font-size:15.6px;color:#fff;">Guardar y nuevo</div>
<div class="px" style="left:291px;top:813px;width:75px;height:33.5px;border:1px solid #4fc497;border-radius:3px"></div>
<div class="a " style="left:306px;top:821.70px;font-size:15.6px;color:#4fc497;">Cerrar</div>
<div class="a " style="left:378px;top:821.70px;font-size:15.6px;color:#3d9be9;">Plantillas</div>
<svg class="px" style="left:444px;top:826px" width="13" height="9" viewBox="0 0 13 9"><path d="M1.5 1.5 L6.5 6.5 L11.5 1.5" fill="none" stroke="#3d9be9" stroke-width="1.3"/></svg>
</body></html>
